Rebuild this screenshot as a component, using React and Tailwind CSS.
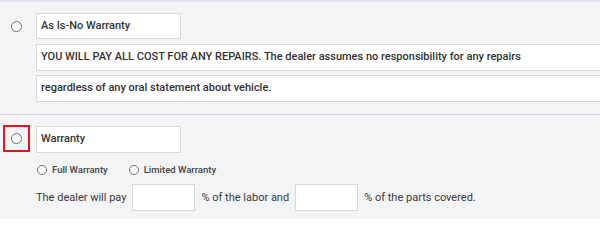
import React from "react";

const Radio = ({ size = "w-[11px] h-[11px]" }) => (
  <span className={`${size} block rounded-full border-[1.5px] border-[#6f6f6f] bg-white box-border`} />
);

export default function App() {
  return (
    <div
      className="w-[600px] h-[219px] overflow-hidden bg-[#f3f4f6] border-t-2 border-[#e2e3e6] text-[#333]"
      style={{ fontFamily: "Roboto, 'Liberation Sans', sans-serif" }}
    >
      {/* Section 1 */}
      <div className="flex pt-[11px] pb-[12px] border-b border-[#d6d7da]">
        <div className="w-[36px] h-[26px] shrink-0 flex items-center pl-[11px]">
          <Radio />
        </div>
        <div className="flex-1 flex flex-col">
          <div className="w-[145px] h-[26px] bg-white border border-[#d9d9d9] flex items-center pl-[4px] text-[11px] font-medium">
            As Is-No Warranty
          </div>
          <div className="mt-[5px] h-[27px] bg-white border border-[#d9d9d9] border-r-0 flex items-center pl-[4px] text-[11px] font-medium whitespace-nowrap">
            YOU WILL PAY ALL COST FOR ANY REPAIRS. The dealer assumes no responsibility for any repairs
          </div>
          <div className="mt-[4px] h-[27px] bg-white border border-[#d9d9d9] border-r-0 flex items-center pl-[4px] text-[11px] font-medium whitespace-nowrap">
            regardless of any oral statement about vehicle.
          </div>
        </div>
      </div>

      {/* Section 2 */}
      <div className="flex pt-[10px]">
        <div className="w-[36px] shrink-0 flex pl-[3px]">
          <div className="w-[27px] h-[27px] border-2 border-[#e0161b] flex items-center justify-center">
            <Radio />
          </div>
        </div>
        <div className="flex-1 flex flex-col">
          <div className="mt-[1px] w-[145px] h-[27px] bg-white border border-[#d9d9d9] flex items-center pl-[4px] text-[11px] font-medium">
            Warranty
          </div>
          <div className="mt-[10px] flex items-center text-[9.5px] font-medium text-[#444]">
            <span className="flex items-center gap-[5px] ml-[1px]">
              <Radio size="w-[10px] h-[10px]" />
              Full Warranty
            </span>
            <span className="flex items-center gap-[5px] ml-[21px]">
              <Radio size="w-[10px] h-[10px]" />
              Limited Warranty
            </span>
          </div>
          <div className="mt-[7px] flex items-center text-[11px] text-[#3a3a3a]">
            <span>The dealer will pay</span>
            <span className="ml-[6px] w-[63px] h-[27px] bg-white border border-[#d9d9d9]" />
            <span className="ml-[6px]">% of the labor and</span>
            <span className="ml-[6px] w-[63px] h-[27px] bg-white border border-[#d9d9d9]" />
            <span className="ml-[6px]">% of the parts covered.</span>
          </div>
        </div>
      </div>
    </div>
  );
}
